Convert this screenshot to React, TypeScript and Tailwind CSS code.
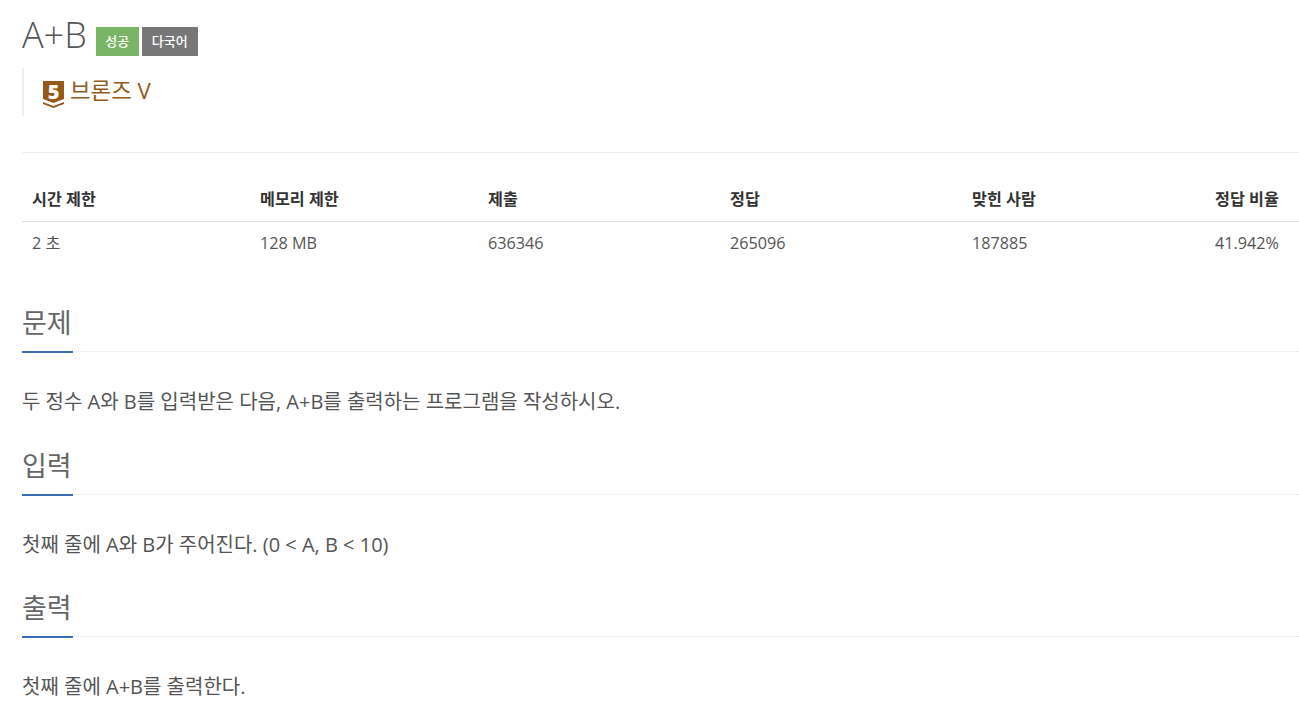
const font = { fontFamily: '"Open Sans", "Noto Sans CJK KR", sans-serif' };

const headers = ["시간 제한", "메모리 제한", "제출", "정답", "맞힌 사람", "정답 비율"];
const values = ["2 초", "128 MB", "636346", "265096", "187885", "41.942%"];

function Section({ title, text }: { title: string; text: string }) {
  return (
    <section>
      <div className="border-b border-dotted border-[#e5e5e5]">
        <h2 className="-mb-[2px] h-[47px] w-[51px] whitespace-nowrap border-b-2 border-[#3b6cb7] text-[27px] leading-[34px] text-[#666]">
          {title}
        </h2>
      </div>
      <p className="mt-[34px] h-[32px] text-[20px] leading-[32px] text-[#555]">{text}</p>
    </section>
  );
}

function BronzeIcon() {
  return (
    <div className="relative mt-[1px] h-[27px] w-[21px] shrink-0">
      <svg width="21" height="27" viewBox="0 0 21 27">
        <path d="M0 0H21V18L10.5 22L0 18Z" fill="#96591b" />
        <path d="M0 21L10.5 25L21 21V23L10.5 27L0 23Z" fill="#96591b" />
      </svg>
      <span className="absolute left-0 top-0 w-[21px] text-center text-[20px] font-extrabold leading-[21px] text-white">5</span>
    </div>
  );
}

export default function App() {
  return (
    <div className="h-[724px] overflow-hidden bg-white pl-[22px]" style={font}>
      <div className="flex h-[68px] items-start pt-[10px]">
        <h1 className="text-[36px] font-light leading-[50px] text-[#555]">A+B</h1>
        <span className="ml-[9px] mt-[17px] flex h-[29px] w-[43px] items-center justify-center bg-[#7ab566] text-[13px] font-medium text-white">성공</span>
        <span className="ml-[3px] mt-[17px] flex h-[29px] w-[56px] items-center justify-center bg-[#777] text-[13px] font-medium text-white">다국어</span>
      </div>
      <div className="flex h-[48px] items-start gap-[6px] border-l-2 border-[#eee] pl-[19px] pt-[12px]">
        <BronzeIcon />
        <span className="-mt-[6px] text-[22.4px] leading-[34px] text-[#96591b]">브론즈 V</span>
      </div>
      <hr className="mt-[36px] border-[#eee]" />
      <div className="mt-[36px] grid grid-cols-[228px_228px_242px_242px_243px_1fr] border-b border-[#ddd] pb-[12px]">
        {headers.map((h) => (
          <div key={h} className="pl-[10px] text-[16.2px] font-bold leading-[20px] text-[#333]">{h}</div>
        ))}
      </div>
      <div className="grid h-[42px] grid-cols-[228px_228px_242px_242px_243px_1fr] items-center">
        {values.map((v) => (
          <div key={v} className="pl-[10px] text-[16.2px] text-[#555]">{v}</div>
        ))}
      </div>
      <div className="mt-[42px] flex flex-col gap-[30.5px]">
        <Section title="문제" text="두 정수 A와 B를 입력받은 다음, A+B를 출력하는 프로그램을 작성하시오." />
        <Section title="입력" text="첫째 줄에 A와 B가 주어진다. (0 < A, B < 10)" />
        <Section title="출력" text="첫째 줄에 A+B를 출력한다." />
      </div>
    </div>
  );
}
